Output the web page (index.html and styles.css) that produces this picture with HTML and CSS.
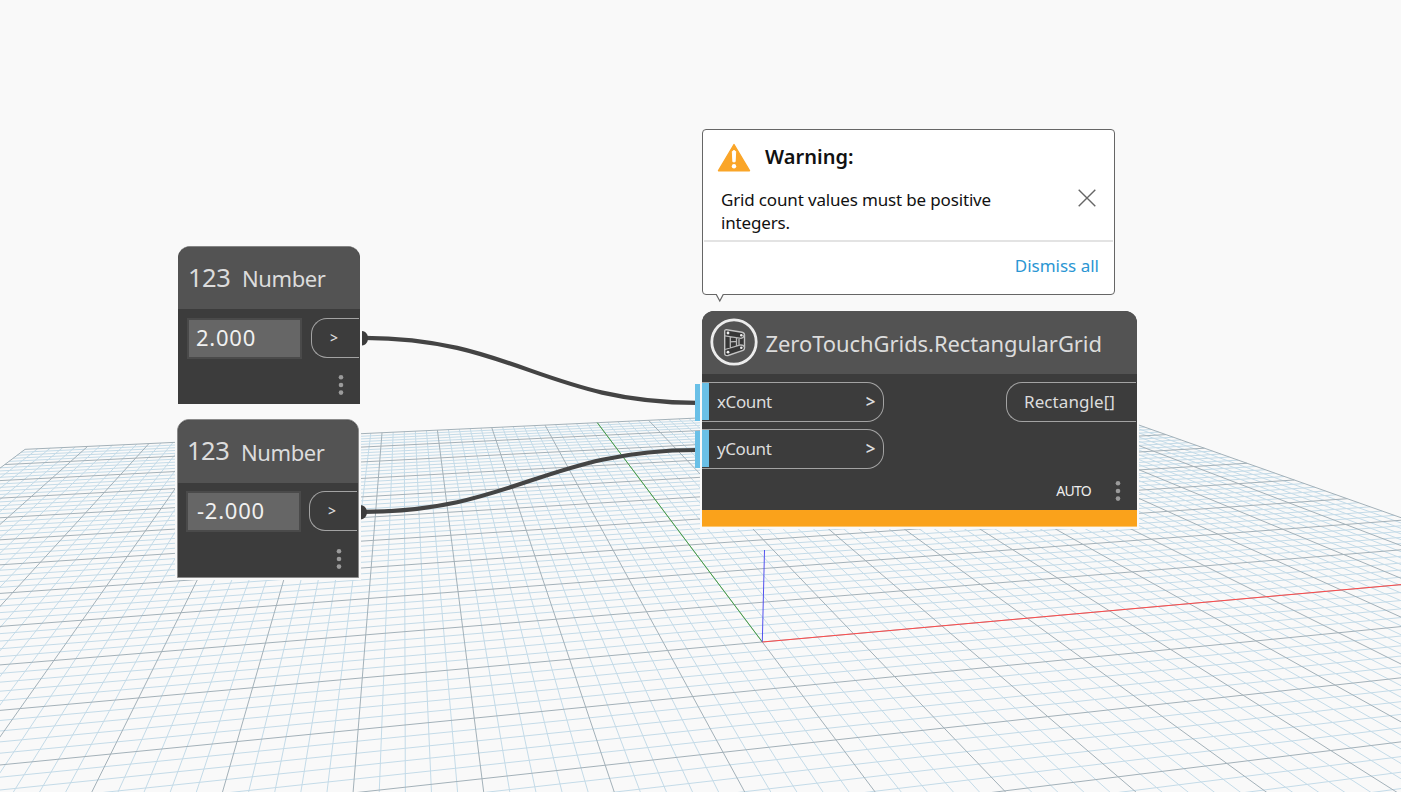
FILE: index.html
```html
<!DOCTYPE html>
<html lang="en">
<head>
<meta charset="utf-8">
<title>Graph workspace</title>
<link rel="stylesheet" href="styles.css">
</head>
<body>
<main class="workspace">
  <svg class="scene" viewBox="0 0 1401 792" aria-hidden="true">
    <path id="minor" class="grid-minor"/>
    <path id="major" class="grid-major"/>
    <path class="axis-y" d="M762.3 642L597.3 422.7"/>
    <path class="axis-z" d="M762.3 642L764.5 550"/>
    <path class="axis-x" d="M762.3 642L1552.3 571"/>
  </svg>

  <svg class="wires" viewBox="0 0 1401 792" aria-hidden="true">
    <path class="wire" d="M364 337.8C512 337.8 547 402.8 697 402.8"/>
    <path class="wire" d="M364 511.8C512 511.8 547 450 697 450"/>
    <path class="plug" d="M362 331C366 331 368 335 368 338.300S366 345.500 362 345.500Z"/>
    <path class="plug" d="M360.500 505C364.500 505 367 509 367 512.300S364.500 519.600 360.500 519.600Z"/>
  </svg>

  <section class="node number first">
    <header class="node-head"><span class="num-icon">123</span><span class="node-title">Number</span></header>
    <div class="node-row"><div class="field">2.000</div><div class="port out small">&gt;</div></div>
    <svg class="dots" viewBox="0 0 6 22"><circle cx="3" cy="3.300" r="2.300"/><circle cx="3" cy="11" r="2.300"/><circle cx="3" cy="18.600" r="2.300"/></svg>
  </section>

  <section class="node number second">
    <header class="node-head"><span class="num-icon">123</span><span class="node-title">Number</span></header>
    <div class="node-row"><div class="field">-2.000</div><div class="port out small">&gt;</div></div>
    <svg class="dots" viewBox="0 0 6 22"><circle cx="3" cy="3.300" r="2.300"/><circle cx="3" cy="11" r="2.300"/><circle cx="3" cy="18.600" r="2.300"/></svg>
  </section>

  <section class="node rect-grid">
    <header class="node-head">
      <svg class="zt-icon" viewBox="0 0 48 48">
        <circle cx="24" cy="24" r="22.200" fill="none" stroke="#ececec" stroke-width="2.800"/>
        <path d="M14.700 13.500Q14.700 11.500 16.700 11.800L32 14.300Q34.500 14.800 34.500 17.300V30Q34.500 31.800 33 32.300L18 37.500Q14.700 38 14.700 35.500Z" fill="#363636" stroke="#c4c4c4" stroke-width="1.400"/>
        <path d="M15 17.800L31 20.300Q34 20 34 17M15 31.500L30.500 27Q34 26.800 34.500 29.500M20.300 18.800V30M26.500 19.700V28M29 20V27.500M20.300 23.800L26.500 23.300" fill="none" stroke="#b8b8b8" stroke-width="1.300"/>
        <g fill="#eee"><circle cx="18" cy="15" r="1.400"/><circle cx="31.300" cy="17.300" r="1.300"/><circle cx="18" cy="34.200" r="1.400"/><circle cx="31.300" cy="29.800" r="1.300"/></g>
      </svg>
      <span class="node-title long">ZeroTouchGrids.RectangularGrid</span>
    </header>
    <div class="ports">
      <div class="inputs">
        <div class="port in"><span>xCount</span><b class="chev">&gt;</b></div>
        <div class="port in"><span>yCount</span><b class="chev">&gt;</b></div>
      </div>
      <div class="port out wide">Rectangle[]</div>
    </div>
    <footer class="node-foot"><span class="auto">AUTO</span><svg class="dots" viewBox="0 0 6 22"><circle cx="3" cy="3.300" r="2.300"/><circle cx="3" cy="11" r="2.300"/><circle cx="3" cy="18.600" r="2.300"/></svg></footer>
    <div class="warn-bar"></div>
  </section>

  <section class="bubble">
    <div class="bubble-head">
      <svg class="warn-icon" viewBox="0 0 34 29"><path d="M17 1.500L32.500 27.700H1.500Z" fill="#faa528" stroke="#faa528" stroke-width="1.400" stroke-linejoin="round"/><path d="M15.300 8.500Q17 6.500 18.700 8.500L18.100 18.800H15.900Z" fill="#fff" stroke="#fff" stroke-width="1" stroke-linejoin="round"/><circle cx="17" cy="23.200" r="2.200" fill="#fff"/></svg>
      <strong class="warn-title">Warning:</strong>
    </div>
    <div class="bubble-body">
      <p class="message">Grid count values must be positive<br>integers.</p>
      <svg class="close" viewBox="0 0 18 18"><path d="M.7 .7L17.300 17.300M17.300 .7L.7 17.300"/></svg>
    </div>
    <div class="bubble-foot"><span class="dismiss">Dismiss all</span></div>
    <svg class="tail" viewBox="0 0 10 9"><path d="M1 0L4.800 7L8.500 0" fill="#fff" stroke="#666" stroke-width="1.200"/></svg>
  </section>
</main>
<script src="grid.js"></script>
</body>
</html>
```

FILE: styles.css
```css
* { box-sizing: border-box; }
body { margin: 0; background: #f9f9f9; font-family: "Noto Sans", sans-serif; }
.workspace { position: relative; width: 1401px; height: 792px; overflow: hidden; background: #f9f9f9; }
.scene, .wires { position: absolute; inset: 0; width: 1401px; height: 792px; }
.scene path { fill: none; stroke-width: 1; }
.scene .grid-minor { stroke: #c4dbe8; }
.scene .grid-major { stroke: #a3b1b9; }
.scene .axis-x { stroke: #ff4a4a; }
.scene .axis-y { stroke: #45a045; }
.scene .axis-z { stroke: #5151ee; }
.wire { fill: none; stroke: #444; stroke-width: 4.2; }
.plug { fill: #3c3c3c; }

.node { position: absolute; display: flex; flex-direction: column; background: #3c3c3c; color: #dcdcdc; border-radius: 12px 12px 0 0; box-shadow: 0 0 0 2px #f9f9f9; }
.node-head { display: flex; align-items: center; background: #535353; border-radius: 12px 12px 0 0; height: 63px; flex: none; }
.node-title { font-size: 22px; line-height: 30px; white-space: nowrap; }
.dots { width: 6px; height: 22px; fill: #9b9b9b; flex: none; }

.number { width: 182px; height: 158px; }
.first { left: 178px; top: 246px; border-top: 1px solid #858585; }
.second { left: 177px; top: 419px; height: 159px; border: 1px solid #8b8b8b; }
.first .node-head { height: 62px; padding-left: 10px; }
.second .node-head { height: 63px; padding-left: 9px; }
.num-icon { width: 54px; font-size: 25.500px; line-height: 34px; letter-spacing: -.5px; padding-bottom: 3px; }
.number .node-title { letter-spacing: -.4px; }
.node-row { display: flex; justify-content: space-between; height: 41px; margin: 9px 0 0 9px; }
.second .node-row { margin: 8px 0 0 8px; }
.field { width: 115px; height: 41px; background: #666; border: 2px solid #4a4a4a; color: #f0f0f0; font-size: 22px; line-height: 34px; letter-spacing: .75px; padding-left: 7px; white-space: nowrap; }
.second .field { padding-left: 9px; }
.port { height: 39.500px; border: 1.500px solid #a3a3a3; display: flex; align-items: center; font-size: 17px; color: #dcdcdc; white-space: nowrap; }
.port.out { border-right: 0; border-radius: 16px 0 0 16px; }
.port.small { width: 48px; margin-right: 1px; font-size: 14px; font-weight: 500; padding: 0 0 1px 18px; }
.number .dots { align-self: flex-end; margin: 15px 16px 0 0; }
.second .dots { margin-top: 15.500px; }

.rect-grid { left: 702px; top: 311px; width: 435px; height: 216px; }
.rect-grid .node-head { padding: 0 0 0 7.500px; gap: 8px; }
.zt-icon { width: 48px; height: 48px; flex: none; margin-bottom: 1px; }
.long { padding-top: 1px; letter-spacing: -.07px; }
.ports { display: flex; justify-content: space-between; height: 95px; padding-top: 8px; }
.inputs { display: flex; flex-direction: column; gap: 7.500px; }
.port.in { position: relative; width: 182px; border-left: 0; border-radius: 0 17px 17px 0; justify-content: space-between; padding: 0 8px 0 15px; letter-spacing: -.4px; }
.port.in::before { content: ""; position: absolute; left: 0; top: 0; width: 7px; height: 37px; background: #6ac0e7; }
.port.in::after { content: ""; position: absolute; left: -7px; top: 1px; width: 5px; height: 37px; background: #6ac0e7; }
.chev { font-size: 17px; font-weight: 600; }
.port.wide { width: 130px; margin-right: 1px; padding-left: 17px; letter-spacing: .08px; }
.node-foot { display: flex; align-items: center; justify-content: flex-end; height: 41px; margin-top: 0; padding: 3px 16px 0 0; gap: 24px; }
.auto { font-size: 14px; color: #eee; letter-spacing: -.7px; padding-bottom: 2px; }
.warn-bar { height: 17px; background: #faa21b; border-bottom: 1px solid #fbc670; }

.bubble { position: absolute; left: 702px; top: 129px; width: 413px; height: 166px; border: 1.300px solid #666; border-radius: 4px; background: #fff; color: #111; }
.bubble-head { display: flex; align-items: flex-start; height: 57px; padding: 13px 0 0 14px; gap: 14px; }
.warn-icon { width: 34px; height: 29px; flex: none; }
.warn-title { font-size: 20px; font-weight: 600; line-height: 28px; letter-spacing: .05px; }
.bubble-body { display: flex; justify-content: space-between; height: 55px; margin: 0 1px; padding: 1px 17px 0 17px; border-bottom: 2px solid #e3e3e3; }
.message { margin: 0; font-size: 17px; line-height: 23px; letter-spacing: -.16px; white-space: nowrap; }
.close { width: 18px; height: 18px; margin-top: 1px; }
.close path { stroke: #666; stroke-width: 1.400; }
.bubble-foot { display: flex; justify-content: flex-end; padding: 12px 15px 0 0; font-size: 17px; line-height: 23px; color: #2a96d3; }
.tail { position: absolute; left: 12px; top: 164px; width: 10px; height: 9px; }
```

FILE: grid.js
```js
// Ground plane: 20 x 20 major cells, five minor cells in each.
const EXTENT = 10;
const DIVISIONS = 5;
const NEAR = 0.12;

const depth = (u, v) => 1 + 0.01766 * u + 0.08515 * v;
const project = (u, v) => {
  const w = depth(u, v);
  return [(762.3 + 106.4 * u + 34.36 * v) / w, (642 + 3 * u + 14.06 * v) / w];
};

// Path for one ground line, cut at the near plane.
function segment(a, b) {
  const wa = depth(...a), wb = depth(...b);
  if (wa < NEAR && wb < NEAR) return "";
  const cut = (p, q, wp, wq) => {
    const t = (NEAR - wp) / (wq - wp);
    return [p[0] + (q[0] - p[0]) * t, p[1] + (q[1] - p[1]) * t];
  };
  const from = wa < NEAR ? cut(a, b, wa, wb) : a;
  const to = wb < NEAR ? cut(b, a, wb, wa) : b;
  const point = (p) => project(...p).map((n) => n.toFixed(2)).join(" ");
  return "M" + point(from) + "L" + point(to);
}

let minor = "", major = "";
for (let i = -EXTENT * DIVISIONS; i <= EXTENT * DIVISIONS; i++) {
  const k = i / DIVISIONS;
  const lines = segment([k, -EXTENT], [k, EXTENT]) + segment([-EXTENT, k], [EXTENT, k]);
  if (i % DIVISIONS === 0) major += lines; else minor += lines;
}
document.getElementById("minor").setAttribute("d", minor);
document.getElementById("major").setAttribute("d", major);
```
